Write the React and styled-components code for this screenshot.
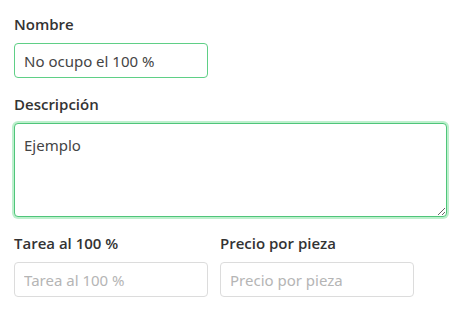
import React from 'react';
import styled, { createGlobalStyle } from 'styled-components';

const GlobalStyle = createGlobalStyle`
  html, body {
    margin: 0;
    background: #fff;
  }
  body {
    font-family: "Noto Sans", "Open Sans", sans-serif;
    color: #333;
  }
`;

const Form = styled.form`
  padding: 12px 14px;
`;

const Group = styled.div`
  display: flex;
  flex-direction: column;
  margin-bottom: 14px;
`;

const Row = styled.div`
  display: flex;
  gap: 12px;
`;

const Label = styled.label`
  font-family: "Open Sans", "Noto Sans", sans-serif;
  font-size: 15px;
  font-weight: 600;
  line-height: 24px;
  margin-bottom: 7px;
  color: #333;
`;

const fieldBase = `
  box-sizing: border-box;
  font-family: inherit;
  font-size: 15px;
  color: #444;
  background: #fff;
  border: 1px solid #dcdcdc;
  border-radius: 4px;
  outline: none;
  &::placeholder {
    color: #b5b5b5;
  }
`;

const Input = styled.input`
  ${fieldBase}
  width: 194px;
  height: 35px;
  padding: 0 9px;
  border-color: ${(p) => (p.$valid ? '#5fcf86' : '#dcdcdc')};
`;

const TextArea = styled.textarea`
  ${fieldBase}
  width: 100%;
  height: 94px;
  padding: 11px 9px;
  resize: vertical;
  border: 1px solid #4fc57a;
  box-shadow: 0 0 0 2px #bdf0cd;
  caret-color: #222;
`;

export default function App() {
  return (
    <>
      <GlobalStyle />
      <Form>
        <Group>
          <Label>Nombre</Label>
          <Input $valid defaultValue="No ocupo el 100 %" />
        </Group>
        <Group>
          <Label>Descripción</Label>
          <TextArea autoFocus defaultValue="Ejemplo" />
        </Group>
        <Row>
          <Group>
            <Label>Tarea al 100 %</Label>
            <Input placeholder="Tarea al 100 %" />
          </Group>
          <Group>
            <Label>Precio por pieza</Label>
            <Input placeholder="Precio por pieza" />
          </Group>
        </Row>
      </Form>
    </>
  );
}
